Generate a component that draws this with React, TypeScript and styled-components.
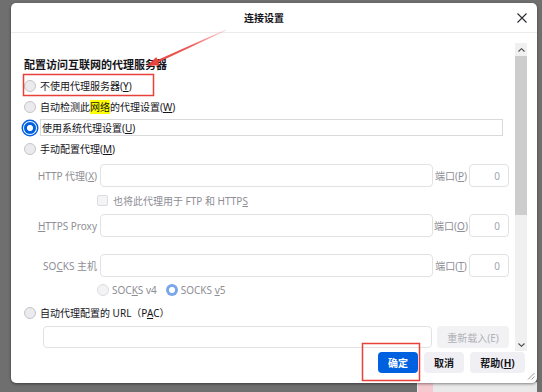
import React from "react";
import styled, { createGlobalStyle } from "styled-components";

const TEXT = "#15141a";
const MUTED = "#8e8e95";
const BLUE = "#0061e0";
const RED = "#e8413c";

const GlobalStyle = createGlobalStyle`
  html, body {
    margin: 0;
    padding: 0;
  }
  body {
    font-family: "Noto Sans", "Noto Sans CJK SC", sans-serif;
    color: ${TEXT};
  }
  * {
    box-sizing: border-box;
  }
`;

const App = () => {
  return (
    <Page>
      <GlobalStyle />
      <BehindWindow>
        <PinkTab />
      </BehindWindow>
      <Dialog>
        <Header>
          <Title>连接设置</Title>
          <CloseButton aria-label="关闭">
            <svg width="10" height="10" viewBox="0 0 10 10">
              <path d="M0.5 0.5 L9.5 9.5 M9.5 0.5 L0.5 9.5" stroke="#2b2a33" strokeWidth="1.1" />
            </svg>
          </CloseButton>
        </Header>

        <Body>
          <Content>
            <Heading>配置访问互联网的代理服务器</Heading>

            <OptionRow>
              <Radio />
              <Label>
                不使用代理服务器(<Key>Y</Key>)
              </Label>
            </OptionRow>
            <OptionRow>
              <Radio />
              <Label>
                自动检测此<Highlight>网络</Highlight>的代理设置(<Key>W</Key>)
              </Label>
            </OptionRow>
            <OptionRow>
              <Radio $checked $focused />
              <FocusLabel>
                使用系统代理设置(<Key>U</Key>)
              </FocusLabel>
            </OptionRow>
            <OptionRow>
              <Radio />
              <Label>
                手动配置代理(<Key>M</Key>)
              </Label>
            </OptionRow>

            <FieldRow $top={5}>
              <FieldLabel>
                HTTP 代理(<Key>X</Key>)
              </FieldLabel>
              <TextBox />
              <PortLabel>
                端口(<Key>P</Key>)
              </PortLabel>
              <PortBox>0</PortBox>
            </FieldRow>
            <CheckRow>
              <Checkbox />
              <Label $disabled>
                也将此代理用于 FTP 和 HTTP<Key>S</Key>
              </Label>
            </CheckRow>
            <FieldRow>
              <FieldLabel>
                <Key>H</Key>TTPS Proxy
              </FieldLabel>
              <TextBox />
              <PortLabel>
                端口(<Key>O</Key>)
              </PortLabel>
              <PortBox>0</PortBox>
            </FieldRow>
            <FieldRow $top={17}>
              <FieldLabel>
                SO<Key>C</Key>KS 主机
              </FieldLabel>
              <TextBox />
              <PortLabel>
                端口(<Key>T</Key>)
              </PortLabel>
              <PortBox>0</PortBox>
            </FieldRow>
            <VersionRow>
              <VersionOption>
                <Radio $disabled />
                <Label $disabled>
                  SOC<Key>K</Key>S v4
                </Label>
              </VersionOption>
              <VersionOption>
                <Radio $checked $disabled />
                <Label $disabled>
                  SOCKS <Key>v</Key>5
                </Label>
              </VersionOption>
            </VersionRow>

            <OptionRow $height={20}>
              <Radio />
              <Label>
                自动代理配置的 URL（P<Key>A</Key>C）
              </Label>
            </OptionRow>
            <UrlRow>
              <TextBox />
              <ReloadButton disabled>重新载入(E)</ReloadButton>
            </UrlRow>
          </Content>

          <ScrollTrack>
            <ScrollArrow>
              <svg width="7" height="4" viewBox="0 0 7 4">
                <path d="M0.5 3.5 L3.5 0.7 L6.5 3.5" stroke="#4a4a4f" strokeWidth="1.1" fill="none" />
              </svg>
            </ScrollArrow>
            <ScrollThumb />
            <ScrollRest />
            <ScrollArrow>
              <svg width="7" height="4" viewBox="0 0 7 4">
                <path d="M0.5 0.5 L3.5 3.3 L6.5 0.5" stroke="#4a4a4f" strokeWidth="1.1" fill="none" />
              </svg>
            </ScrollArrow>
          </ScrollTrack>
        </Body>

        <Footer>
          <DialogButton $primary $width={40}>
            确定
          </DialogButton>
          <DialogButton $width={40}>取消</DialogButton>
          <DialogButton $width={55}>
            帮助(<Key>H</Key>)
          </DialogButton>
        </Footer>

        <ResizeGrip width="8" height="8" viewBox="0 0 8 8">
          <path d="M7.5 1 L1 7.5 M7.5 4.5 L4.5 7.5" stroke="#8a8a8a" strokeWidth="0.9" />
        </ResizeGrip>
      </Dialog>

      <Annotations width="542" height="392" viewBox="0 0 542 392">
        <defs>
          <linearGradient id="arrowFade" x1="226" y1="30" x2="147" y2="66" gradientUnits="userSpaceOnUse">
            <stop offset="0" stopColor={RED} stopOpacity="0.15" />
            <stop offset="0.45" stopColor={RED} stopOpacity="0.85" />
            <stop offset="1" stopColor={RED} />
          </linearGradient>
        </defs>
        <rect x="23.5" y="74.5" width="130" height="21" fill="none" stroke={RED} strokeWidth="1.5" />
        <rect x="362.5" y="343.5" width="57" height="37" fill="none" stroke={RED} strokeWidth="1.5" />
        <polygon
          points="226.2,30.5 158.5,62.3 159.8,65.2 147,66 156.2,57 157.5,59.9 225.8,29.5"
          fill="url(#arrowFade)"
        />
      </Annotations>
    </Page>
  );
};

const Page = styled.div`
  position: relative;
  width: 542px;
  height: 392px;
  padding: 3px 0 0 11px;
  background-color: #6f6f6f;
  overflow: hidden;
`;

const BehindWindow = styled.div`
  position: absolute;
  left: 417px;
  top: 382px;
  width: 120px;
  height: 10px;
  background-color: #e9e9ea;
`;

const PinkTab = styled.div`
  width: 15px;
  height: 100%;
  margin-left: 1px;
  background-color: #f4c9cf;
`;

const Dialog = styled.div`
  position: relative;
  z-index: 1;
  width: 526px;
  height: 380px;
  display: flex;
  flex-direction: column;
  background-color: #fff;
  border-radius: 5px;
  box-shadow: 0 1px 3px rgba(0, 0, 0, 0.45);
`;

const Header = styled.div`
  height: 30px;
  flex-shrink: 0;
  display: flex;
  align-items: center;
  padding-right: 10px;
  border-bottom: 1px solid #ececec;
`;

const Title = styled.div`
  flex: 1;
  text-align: center;
  font-size: 10px;
  font-weight: 700;
  color: ${TEXT};
`;

const CloseButton = styled.button`
  width: 10px;
  height: 10px;
  padding: 0;
  border: none;
  background: transparent;
  display: flex;
  cursor: pointer;
`;

const Body = styled.div`
  height: 318px;
  flex-shrink: 0;
  display: flex;
`;

const Content = styled.div`
  flex: 1;
  display: flex;
  flex-direction: column;
  padding: 0 6px 0 13px;
  font-size: 10px;
`;

const Heading = styled.div`
  margin-top: 24px;
  height: 16px;
  line-height: 16px;
  margin-bottom: 2px;
  font-size: 11px;
  font-weight: 700;
  white-space: nowrap;
`;

const OptionRow = styled.div<{ $height?: number }>`
  height: ${(p) => p.$height ?? 21}px;
  display: flex;
  align-items: center;
  gap: 4px;
`;

const Radio = styled.span<{ $checked?: boolean; $disabled?: boolean; $focused?: boolean }>`
  flex-shrink: 0;
  width: 12px;
  height: 12px;
  border-radius: 50%;
  border: 1px solid
    ${(p) => (p.$checked ? "transparent" : p.$disabled ? "#dcdce0" : "#c4c4c9")};
  background: ${(p) =>
    p.$checked
      ? `radial-gradient(circle, #fff 0 2.8px, ${p.$disabled ? "#7ba6ea" : BLUE} 3.2px)`
      : p.$disabled
        ? "#f3f3f5"
        : "#ebebee"};
  box-shadow: ${(p) => (p.$focused ? `0 0 0 1px #fff, 0 0 0 2.5px ${BLUE}` : "none")};
`;

const Label = styled.span<{ $disabled?: boolean }>`
  white-space: nowrap;
  line-height: 14px;
  color: ${(p) => (p.$disabled ? MUTED : TEXT)};
`;

const FocusLabel = styled.span`
  flex: 1;
  height: 17px;
  margin-right: 6px;
  padding-left: 1px;
  display: flex;
  align-items: center;
  border: 1px solid #dadadd;
  white-space: nowrap;
`;

const Key = styled.span`
  text-decoration: underline;
  text-underline-offset: 1px;
`;

const Highlight = styled.span`
  background-color: #ffff00;
`;

const FieldRow = styled.div<{ $top?: number }>`
  height: 23px;
  margin-top: ${(p) => p.$top ?? 0}px;
  display: flex;
  align-items: center;
  color: ${MUTED};
`;

const FieldLabel = styled.span`
  width: 76px;
  flex-shrink: 0;
  padding-right: 3px;
  text-align: right;
  white-space: nowrap;
`;

const TextBox = styled.div`
  flex: 1;
  height: 100%;
  border: 1px solid #e2e2e5;
  border-radius: 4px;
  background-color: #fff;
`;

const PortLabel = styled.span`
  width: 36px;
  flex-shrink: 0;
  text-align: center;
  white-space: nowrap;
`;

const PortBox = styled.div`
  width: 40px;
  height: 100%;
  padding-right: 8px;
  display: flex;
  align-items: center;
  justify-content: flex-end;
  border: 1px solid #e2e2e5;
  border-radius: 4px;
  color: #a4a4aa;
`;

const CheckRow = styled.div`
  height: 27px;
  padding-left: 73px;
  display: flex;
  align-items: center;
  gap: 5px;
`;

const Checkbox = styled.span`
  width: 11px;
  height: 11px;
  border: 1px solid #dcdce0;
  border-radius: 2px;
  background-color: #f4f4f6;
`;

const VersionRow = styled.div`
  height: 26px;
  padding-left: 73px;
  display: flex;
  align-items: center;
  gap: 9px;
`;

const VersionOption = styled.span`
  display: flex;
  align-items: center;
  gap: 3px;
`;

const UrlRow = styled.div`
  height: 22px;
  margin-top: 3px;
  padding-left: 19px;
  display: flex;
  gap: 5px;
`;

const ReloadButton = styled.button`
  width: 72px;
  height: 100%;
  padding: 0;
  border: none;
  border-radius: 4px;
  background-color: #f2f2f4;
  color: #b0b0b6;
  font: inherit;
  font-size: 10px;
`;

const ScrollTrack = styled.div`
  width: 12px;
  margin: 10px 10px 0 0;
  display: flex;
  flex-direction: column;
  background-color: #f0f0f0;
`;

const ScrollArrow = styled.div`
  height: 13px;
  display: flex;
  align-items: center;
  justify-content: center;
`;

const ScrollThumb = styled.div`
  height: 159px;
  background-color: #cdcdcd;
`;

const ScrollRest = styled.div`
  flex: 1;
`;

const Footer = styled.div`
  flex: 1;
  display: flex;
  justify-content: flex-end;
  align-items: flex-start;
  gap: 6px;
  padding: 1px 12px 0 0;
`;

const DialogButton = styled.button<{ $primary?: boolean; $width: number }>`
  width: ${(p) => p.$width}px;
  height: 21px;
  padding: 0;
  border: none;
  border-radius: 4px;
  font-family: inherit;
  font-size: 10px;
  font-weight: 700;
  white-space: nowrap;
  background-color: ${(p) => (p.$primary ? BLUE : "#f0f0f4")};
  color: ${(p) => (p.$primary ? "#fff" : TEXT)};
`;

const ResizeGrip = styled.svg`
  position: absolute;
  right: 2px;
  bottom: 3px;
`;

const Annotations = styled.svg`
  position: absolute;
  left: 0;
  top: 0;
  z-index: 2;
  pointer-events: none;
`;

export default App;
